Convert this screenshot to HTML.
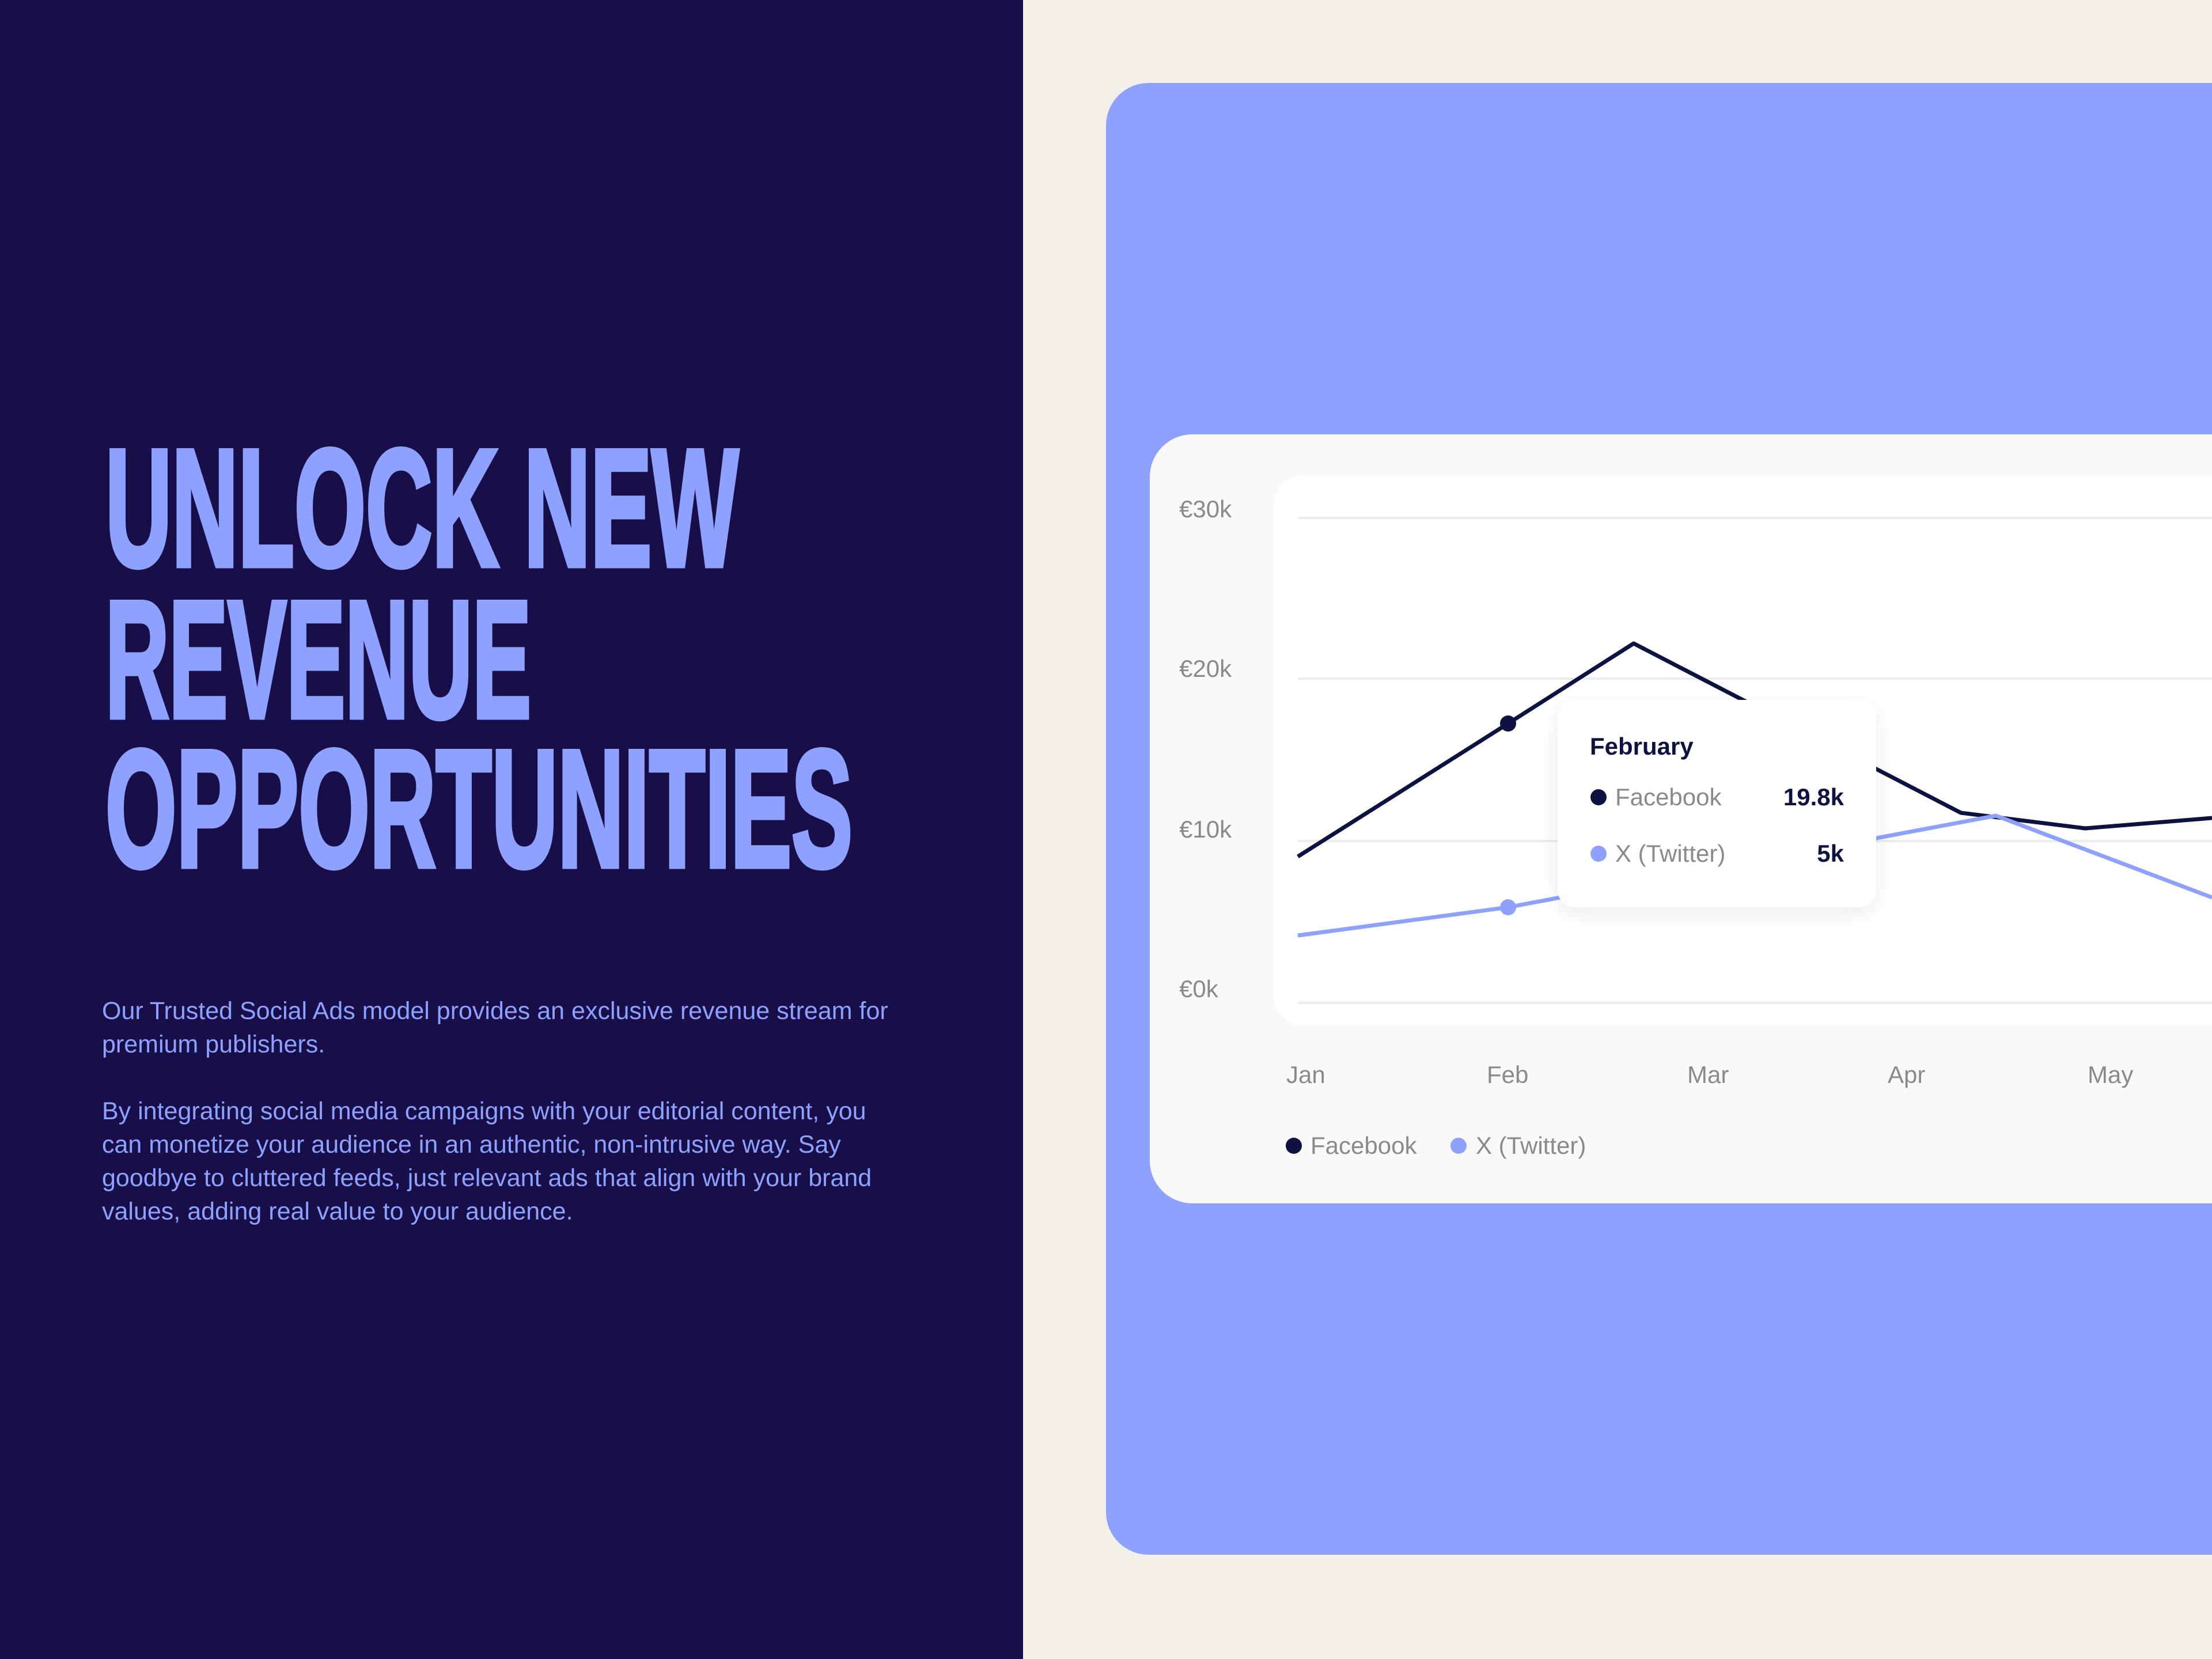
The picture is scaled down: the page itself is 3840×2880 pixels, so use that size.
<!DOCTYPE html>
<html><head><meta charset="utf-8"><style>
*{margin:0;padding:0;box-sizing:border-box}
body{width:3840px;height:2880px;background:#f3f0ea;position:relative;overflow:hidden;font-family:"Liberation Sans",sans-serif}
.left{position:absolute;left:0;top:0;width:1776px;height:2880px;background:#180f49}
.body{position:absolute;left:177px;color:#8fa1ff;font-size:43px;line-height:58px;white-space:nowrap}
.blue{position:absolute;left:1920px;top:144px;width:2000px;height:2555px;background:#8fa1ff;border-radius:74px}
.card{position:absolute;left:1996px;top:754px;width:1950px;height:1335px;background:#f9f9f9;border-radius:74px}
.inner{position:absolute;left:2211px;top:825px;width:1700px;height:955px;background:#fff;border-radius:50px}
.t{position:absolute;font-size:42px;color:#8a8a8a;line-height:1;transform:translateY(-50%)}
.tip{position:absolute;left:2704px;top:1215px;width:553px;height:360px;background:#fff;border-radius:30px;box-shadow:0 10px 40px rgba(0,0,0,0.08)}
.dot{position:absolute;width:28px;height:28px;border-radius:50%;transform:translate(-50%,-50%)}
</style></head><body>
<div class="left"></div>
<svg style="position:absolute;left:0;top:0" width="1776" height="1600">
<g fill="#8fa1ff" stroke="#8fa1ff" stroke-width="9" stroke-linejoin="miter" font-family="Liberation Sans Narrow, Liberation Sans, sans-serif" font-weight="bold" font-size="290">
<text x="183" y="982" textLength="1099" lengthAdjust="spacingAndGlyphs">UNLOCK NEW</text>
<text x="183" y="1245" textLength="739" lengthAdjust="spacingAndGlyphs">REVENUE</text>
<text x="183" y="1504" textLength="1297" lengthAdjust="spacingAndGlyphs">OPPORTUNITIES</text>
</g></svg>
<div class="body" style="top:1726px">Our Trusted Social Ads model provides an exclusive revenue stream for<br>premium publishers.</div>
<div class="body" style="top:1900px">By integrating social media campaigns with your editorial content, you<br>can monetize your audience in an authentic, non-intrusive way. Say<br>goodbye to cluttered feeds, just relevant ads that align with your brand<br>values, adding real value to your audience.</div>
<div class="blue"></div>
<div class="card"></div>
<div class="inner"></div>
<div class="t" style="left:2047px;top:884px">€30k</div>
<div class="t" style="left:2047px;top:1161px">€20k</div>
<div class="t" style="left:2047px;top:1440px">€10k</div>
<div class="t" style="left:2047px;top:1717px">€0k</div>
<svg style="position:absolute;left:0;top:0" width="3840" height="2880">
<g stroke="#ececec" stroke-width="4">
<line x1="2253" y1="899" x2="3840" y2="899"/><line x1="2253" y1="1178" x2="3840" y2="1178"/>
<line x1="2253" y1="1460" x2="3840" y2="1460"/><line x1="2253" y1="1741" x2="3840" y2="1741"/></g>
<polyline fill="none" stroke="#0e1240" stroke-width="7" stroke-linejoin="round" points="2253,1487 2618,1256 2836,1117 3404,1411 3620,1438 3840,1420"/>
<polyline fill="none" stroke="#8fa1ff" stroke-width="7" stroke-linejoin="round" points="2253,1624 2618,1575 3465,1416 3840,1558"/>
<circle cx="2618" cy="1256" r="14" fill="#0e1240"/><circle cx="2618" cy="1575" r="14" fill="#8fa1ff"/>
</svg>
<div class="tip"></div>
<div class="t" style="left:2760px;top:1296px;color:#0e1240;font-weight:bold">February</div>
<div class="dot" style="left:2775px;top:1384px;background:#0e1240"></div>
<div class="t" style="left:2804px;top:1384px">Facebook</div>
<div class="t" style="left:3085px;width:116px;text-align:right;top:1384px;color:#0e1240;font-weight:bold">19.8k</div>
<div class="dot" style="left:2775px;top:1482px;background:#8fa1ff"></div>
<div class="t" style="left:2804px;top:1482px">X (Twitter)</div>
<div class="t" style="left:3085px;width:116px;text-align:right;top:1482px;color:#0e1240;font-weight:bold">5k</div>
<div class="t" style="left:2233px;top:1866px">Jan</div>
<div class="t" style="left:2581px;top:1866px">Feb</div>
<div class="t" style="left:2929px;top:1866px">Mar</div>
<div class="t" style="left:3277px;top:1866px">Apr</div>
<div class="t" style="left:3624px;top:1866px">May</div>
<div class="dot" style="left:2246px;top:1989px;background:#0e1240"></div>
<div class="t" style="left:2275px;top:1989px">Facebook</div>
<div class="dot" style="left:2532px;top:1989px;background:#8fa1ff"></div>
<div class="t" style="left:2562px;top:1989px">X (Twitter)</div>
</body></html>
